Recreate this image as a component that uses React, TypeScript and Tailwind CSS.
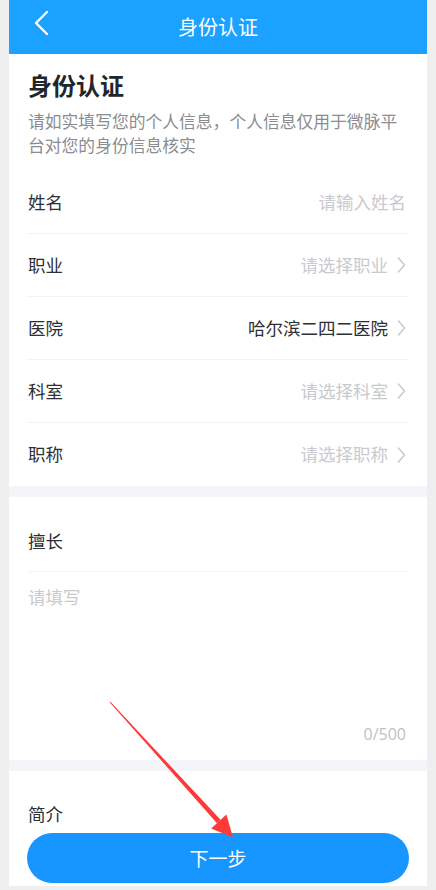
const FONT = { fontFamily: '"Noto Sans CJK SC", "Noto Sans", sans-serif' }

type Row = { label: string; value: string; placeholder: boolean; arrow: boolean }

const ROWS: Row[] = [
  { label: "姓名", value: "请输入姓名", placeholder: true, arrow: false },
  { label: "职业", value: "请选择职业", placeholder: true, arrow: true },
  { label: "医院", value: "哈尔滨二四二医院", placeholder: false, arrow: true },
  { label: "科室", value: "请选择科室", placeholder: true, arrow: true },
  { label: "职称", value: "请选择职称", placeholder: true, arrow: true },
]

function Chevron() {
  return (
    <svg width="9" height="16" viewBox="0 0 9 16" className="ml-[9px] shrink-0">
      <polyline points="1.5,1 7.5,8 1.5,15" fill="none" stroke="#c8c9cc" strokeWidth="1.5" strokeLinecap="round" strokeLinejoin="round" />
    </svg>
  )
}

export default function App() {
  return (
    <div className="relative h-[890px] w-[436px] overflow-hidden bg-[#efefef] px-[9px]" style={FONT}>
      <div className="relative flex h-[886px] flex-col overflow-hidden bg-white">
        <header className="relative flex h-[54px] shrink-0 items-center justify-center bg-[#1ba1ff]">
          <svg width="16" height="26" viewBox="0 0 16 26" className="absolute left-[25px] top-[10px]">
            <polyline points="13,2 2,13 13,24" fill="none" stroke="white" strokeWidth="2.4" strokeLinecap="round" strokeLinejoin="round" />
          </svg>
          <h1 className="text-[20px] leading-[28px] text-white">身份认证</h1>
        </header>

        <section className="px-[18px] pr-[19px] pt-[15px]">
          <h2 className="pl-px text-[24px] font-bold leading-[32px] text-[#22252a]">身份认证</h2>
          <p className="mt-2 w-[380px] pl-px text-[16.8px] leading-[24px] text-[#8a8c91]">
            请如实填写您的个人信息，个人信息仅用于微脉平台对您的身份信息核实
          </p>
          <div className="mt-[14px]">
            {ROWS.map((row, i) => (
              <div
                key={row.label}
                className={`flex h-[63px] items-center justify-between ${i < ROWS.length - 1 ? "border-b border-[#f3f3f5]" : ""}`}
              >
                <span className="pl-px text-[17.5px] text-[#2c2f35]">{row.label}</span>
                <span className="flex items-center pr-[2px]">
                  <span className={`text-[17.5px] ${row.placeholder ? "text-[#c9cacd]" : "text-[#2c2f35]"}`}>{row.value}</span>
                  {row.arrow && <Chevron />}
                </span>
              </div>
            ))}
          </div>
        </section>

        <div className="h-[11px] shrink-0 bg-[#f3f5f8]" />

        <section className="px-[18px] pr-[19px]">
          <div className="border-b border-[#f5f5f7] pb-[18px] pt-[32px]">
            <span className="pl-px text-[17.5px] leading-[24px] text-[#2c2f35]">擅长</span>
          </div>
          <div className="flex h-[188px] flex-col justify-between pb-[14px] pt-[13px]">
            <span className="pl-px text-[17.5px] leading-[24px] text-[#c9cacd]">请填写</span>
            <span className="self-end pr-[2px] text-[16px] leading-[24px] text-[#c0c1c4]" style={{ fontFamily: '"Open Sans", "Noto Sans", sans-serif' }}>
              0/500
            </span>
          </div>
        </section>

        <div className="h-[11px] shrink-0 bg-[#f3f5f8]" />

        <section className="flex-1 px-[18px] pt-[31px]">
          <span className="pl-px text-[17.5px] leading-[24px] text-[#2c2f35]">简介</span>
        </section>

        <button className="absolute bottom-[3px] left-[18px] right-[18px] flex h-[50px] items-center justify-center rounded-full bg-[#1896ff] text-[19px] text-white">
          下一步
        </button>
      </div>

      <svg className="pointer-events-none absolute inset-0" width="436" height="890" viewBox="0 0 436 890">
        <polygon points="109.6,702.3 110.4,701.7 220.6,819.8 217,823.2" fill="#fc3a3a" />
        <polygon points="233,837.5 211.2,828.6 226.4,814.4" fill="#fc3a3a" />
      </svg>
    </div>
  )
}
